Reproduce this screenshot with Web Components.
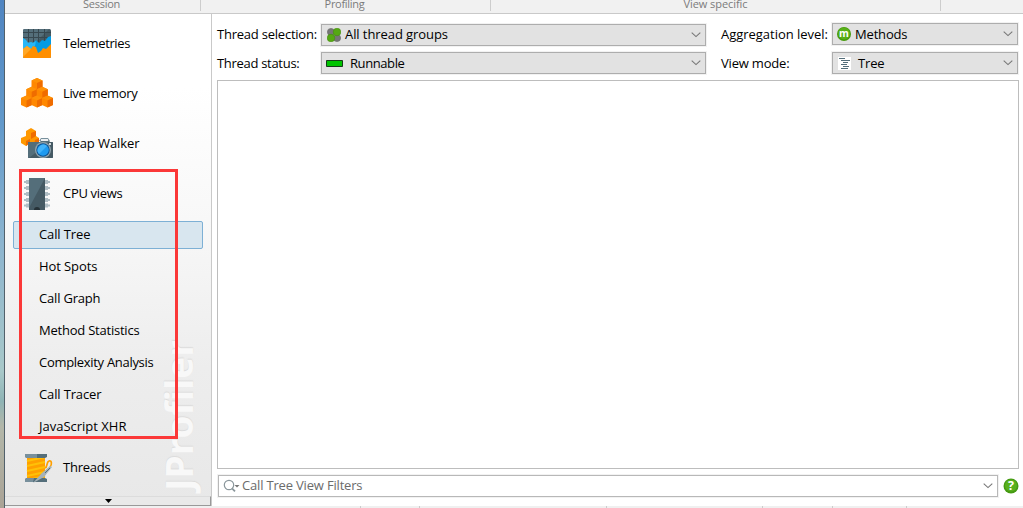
<!DOCTYPE html>
<html lang="en"><head><meta charset="utf-8"><title>JProfiler</title>
<style>
html,body{margin:0;height:100%;overflow:hidden;background:#fff}
body{font:13px/18px "Open Sans","Noto Sans",sans-serif;color:#000}
</style></head><body>
<profiler-window></profiler-window>
<script>
const define=(name,html,after)=>customElements.define(name,class extends HTMLElement{
  connectedCallback(){
    if(this.shadowRoot)return;
    const t=document.createElement('template');
    t.innerHTML=html;
    this.attachShadow({mode:'open'}).append(t.content.cloneNode(true));
    if(after)after.call(this,this.shadowRoot);
  }
});

/* One line of text, tracked so that it fills the width given in "w". */
define('ui-text','<style>:host{display:inline-block;white-space:pre;flex:none;padding-bottom:2px}:host([low]){padding:1px 0}</style><span><slot></slot></span>',function(r){
  const s=r.querySelector('span'),w=+this.getAttribute('w')-.6,n=this.textContent.length;
  const d=(w-s.getBoundingClientRect().width)/n;
  s.style.letterSpacing=d.toFixed(3)+'px';
});

const icons={
telemetry:`<svg width="32" height="32" viewBox="0 0 32 32"><defs><clipPath id="c"><rect x="2" y="1" width="28" height="29" rx="1.5"/></clipPath></defs><g clip-path="url(#c)"><path fill="#455a64" d="M2 1h28v29H2z"/><path fill="#546e7a" d="M2 1h26L2 27z"/><path d="M2 4.500h28M2 9.500h28M7.500 1v13M12.500 1v13M17.500 1v13M23.500 1v13" stroke="#37474f" fill="none"/><path fill="#039be5" d="M2 10l3 2 2 3 3-1 2 1 3-3 3 3 3-3 3 1 3-4 3-1v17H2z"/><path fill="#29b6f6" d="M2 10l3 2 2 3 3-1 2 1 3-2-1 5-12 9z"/><path fill="#ff8f00" d="M2 21l4-3 4 3 2-3 3 1 2 6 3-2 2-3 3 1 5-5v14H2z"/><path fill="#ffa726" d="M2 21l4-3 4 3-8 8z"/></g></svg>`,
memory:`<svg width="32" height="32" viewBox="0 0 32 32"><defs><g id="q"><path fill="#ff8800" d="M0 2.500L5.500 0 11 2.500v7L5.500 12 0 9.500z"/><path fill="#ff9206" d="M0 2.500L5.500 0 11 2.500 5.500 5z"/><path fill="#ef6c00" d="M11 2.500L5.500 5v7L11 9.500z"/></g></defs><use href="#q" x="10.500" y="0"/><use href="#q" x="5.200" y="8.700"/><use href="#q" x="15.800" y="8.700"/><use href="#q" x="0" y="17.500"/><use href="#q" x="10.500" y="17.500"/><use href="#q" x="21" y="17.500"/></svg>`,
heap:`<svg width="32" height="32" viewBox="0 0 32 32"><path fill="#ff9800" d="M5 3l5-3 5 3v5l3 2v4l-5 3-4-2-4 3-5-3v-5l5-2z"/><path fill="#ef6c00" d="M10 5l5-2v5l-5 3zM5 13l4-2v4l-4 3zM14 12l4-2v4l-5 3z"/><path fill="#546e7a" d="M7 14h12l2-3h6l2 3h2a1 1 0 0 1 1 1v14a1 1 0 0 1-1 1H7z"/><path fill="#455a64" d="M8 30l20-16h3a1 1 0 0 1 1 1v14a1 1 0 0 1-1 1z"/><path fill="#78909c" d="M18 13l2-3h7l2 3z"/><path fill="#eceff1" d="M20 11h7v2h-7z"/><circle cx="22" cy="22" r="8" fill="#90a4ae"/><circle cx="22" cy="22" r="6.700" fill="#0a4f8f"/><circle cx="22" cy="22" r="5.800" fill="#1e9af0"/><path d="M18 26a5.700 5.700 0 0 1 8-8z" fill="#42b3fa"/><path fill="#cfd8dc" d="M28 15h2v2h-2z"/></svg>`,
cpu:`<svg width="32" height="34" viewBox="0 0 32 34"><path d="M5 5h22M5 11h22M5 17h22M5 23h22M5 28.500h22" stroke="#b0bec5" stroke-width="4"/><path d="M3 5h26M3 11h26M3 17h26M3 23h26M3 28.500h26" stroke="#b0bec5" stroke-width="2"/><path fill="#455a64" d="M8 1h16v32H8z"/><path fill="#546e7a" d="M8 1h16L8 31z"/><path fill="#263238" d="M13 33a3 3 0 0 1 6 0z"/></svg>`,
threads:`<svg width="32" height="32" viewBox="0 0 32 32"><path fill="#ffa000" d="M6 4h18v24H6z"/><path d="M6 9l18-4M6 14l18-4M6 19l18-4M6 24l18-4M7 28l17-4" stroke="#ffc107" stroke-width="2"/><path fill="#546e7a" d="M4 2h22v3l-2 1H6L4 5zM4 30h22v-3l-2-1H6l-2 1z"/><path fill="#78909c" d="M4 2h12v4H6L4 5zM4 27l2-1h7l-1 4H4z"/><path d="M24 16c3-1 1-6 4-7s3 4 1 6" fill="none" stroke="#ffa000" stroke-width="1.700"/><path fill="#a5b2b8" d="M29 14l2 1-8 10-11 6 9-10z"/><path d="M29 16l-5 5" stroke="#546e7a"/></svg>`,
groups:`<svg width="14" height="14" viewBox="0 0 14 14"><g stroke-width=".6"><circle cx="4" cy="4" r="3.600" fill="#777" stroke="#666"/><circle cx="10" cy="10" r="3.600" fill="#777" stroke="#666"/><circle cx="10" cy="4" r="3.800" fill="#55a913" stroke="#438d0b"/><circle cx="4" cy="10" r="3.800" fill="#55a913" stroke="#438d0b"/></g></svg>`,
run:`<svg width="17" height="7" viewBox="0 0 17 7"><path fill="#00c400" stroke="#153c18" d="M.5.5h16v6H.5z"/></svg>`,
method:`<svg width="14" height="14" viewBox="0 0 14 14"><circle cx="7" cy="7" r="7" fill="#459a0b"/><circle cx="7" cy="6.500" r="6" fill="#58b018"/><text x="7" y="10" text-anchor="middle" font-family="Open Sans,sans-serif" font-weight="700" font-size="10" fill="#fff">m</text></svg>`,
tree:`<svg width="13" height="13" viewBox="0 0 13 13"><path fill="#fff" d="M0 0h13v13H0z"/><path d="M1 1.500h6M3 3.500h9M5 5.500h5M3 7.500h6M5 9.500h6M3 11.500h7" stroke="#546e7a"/></svg>`,
search:`<svg width="17" height="14" viewBox="0 0 17 14"><circle cx="6" cy="6" r="4.700" fill="none" stroke="#8b979c" stroke-width="1.200"/><path d="M9 9.300l3 3" stroke="#8b979c" stroke-width="1.800"/><path fill="#777" d="M11.500 6h5L14 8.500z"/></svg>`,
help:`<svg width="16" height="16" viewBox="0 0 16 16"><circle cx="8" cy="8" r="7.500" fill="#459a13"/><circle cx="8" cy="7.500" r="6" fill="#58b01c"/><text x="8" y="12.400" text-anchor="middle" font-family="Open Sans,sans-serif" font-weight="700" font-size="12.500" fill="#fff">?</text></svg>`
};
define('ui-icon','<style>:host{display:block;flex:none}svg{display:block}</style>',function(r){
  const t=document.createElement('template');t.innerHTML=icons[this.getAttribute('name')];r.append(t.content);
});

define('ribbon-group',`<style>:host{display:block;box-sizing:border-box;height:14px;border-bottom:1px solid #c9c9c9;color:#7b7b7b;font-size:11px;line-height:14px}
.in{display:flex;height:11px;border-right:1px solid var(--sep,#cdcdcd);justify-content:center}
slot{display:block;margin-top:-3px;height:14px}</style><div class="in"><slot></slot></div>`);

define('nav-section',`<style>:host{display:flex;align-items:center;height:50px;padding-left:16px;flex:none}
.i{width:42px;flex:none}</style><div class="i"><slot name="icon"></slot></div><slot></slot>`);

define('nav-item',`<style>:host{display:flex;box-sizing:border-box;align-items:center;height:28px;flex:none;margin:2px 8px;padding-left:25px;border:1px solid transparent;border-radius:2px}
:host([selected]){background:#d8e6ef;border-color:#7db0d5}</style><slot></slot>`);

define('combo-box',`<style>:host{display:flex;box-sizing:border-box;align-items:center;height:22px;border:1px solid #adadad;background:var(--bg,#e2e2e2);box-shadow:0 0 0 1px #f2f2f2;padding:0 4px}
.s{flex:1}svg{flex:none}slot{display:flex;align-items:center}</style>
<slot name="icon"></slot><slot></slot><span class="s"></span><svg width="10" height="6" viewBox="0 0 10 6"><path d="M.7.7L5 4.600 9.300.7" fill="none" stroke="#777" stroke-width="1.100"/></svg>`);

define('side-bar',`<style>
:host{display:flex;flex-direction:column;position:relative;box-sizing:border-box;width:207px;height:492px;background:linear-gradient(#fff 0,#fff 15%,#f8f8f8 42%,#ededed 72%,#e8e8e8);border-right:1px solid #c9c9c9;flex:none}
nav{display:flex;flex-direction:column;padding-top:5px;height:482px;box-sizing:border-box;position:relative}
.mark{position:absolute;left:152px;bottom:15px;writing-mode:vertical-rl;transform:rotate(180deg);font:700 37px/44px "Open Sans",sans-serif;color:#f8f8f8;text-shadow:1px 0 1px #dadada;white-space:nowrap}
.box{position:absolute;left:14px;top:155px;width:153px;height:264px;border:3px solid #fb3838;z-index:2}
.more{box-sizing:border-box;height:10px;border-top:1px solid #dcdcdc;border-right:1px solid #999;border-bottom:1px solid #999;display:flex;justify-content:center;align-items:center;padding-left:2px;background:#e9e9e9}
</style>
<div class="mark">JProfiler</div>
<nav>
<nav-section><ui-icon slot="icon" name="telemetry"></ui-icon><ui-text w="67.6">Telemetries</ui-text></nav-section>
<nav-section><ui-icon slot="icon" name="memory"></ui-icon><ui-text w="75">Live memory</ui-text></nav-section>
<nav-section><ui-icon slot="icon" name="heap"></ui-icon><ui-text w="77">Heap Walker</ui-text></nav-section>
<nav-section><ui-icon slot="icon" name="cpu"></ui-icon><ui-text w="60">CPU views</ui-text></nav-section>
<nav-item selected><ui-text w="52">Call Tree</ui-text></nav-item>
<nav-item><ui-text w="59">Hot Spots</ui-text></nav-item>
<nav-item><ui-text w="62">Call Graph</ui-text></nav-item>
<nav-item><ui-text w="101">Method Statistics</ui-text></nav-item>
<nav-item><ui-text w="115">Complexity Analysis</ui-text></nav-item>
<nav-item><ui-text w="63">Call Tracer</ui-text></nav-item>
<nav-item><ui-text w="88">JavaScript XHR</ui-text></nav-item>
<nav-section><ui-icon slot="icon" name="threads"></ui-icon><ui-text w="48">Threads</ui-text></nav-section>
</nav>
<div class="more"><svg width="7" height="4" viewBox="0 0 7 4"><path d="M0 0h7L3.500 4z"/></svg></div>
<div class="box"></div>`);

define('call-tree-view',`<style>
:host{display:flex;flex-direction:column;box-sizing:border-box;flex:1;padding:9px 4px 0 5px;background:#fff}
.f{display:grid;grid-template-columns:104px 385px 15px 111px 186px;height:51px;align-content:start;row-gap:6px;padding-top:1px;align-items:center}
.l2{grid-column:4}.a{margin-top:-1px;margin-bottom:1px}
.view{box-sizing:border-box;height:389px;margin-top:5px;border:1px solid #bdbdbd}
.foot{display:flex;align-items:center;margin:6px 0 0 1px;gap:5px}
.foot combo-box{width:780px;--bg:#fff;color:#6b6b6b;border-color:#b8b8b8}
.g{margin-right:4px}.r{margin-right:7px}.t{margin:0 7px 0 1px}.q{margin-right:2px}
</style>
<div class="f">
<ui-text w="100.500">Thread selection:</ui-text><combo-box><ui-icon class="g" style="margin-left:1px" slot="icon" name="groups"></ui-icon><ui-text w="103.600">All thread groups</ui-text></combo-box>
<ui-text class="l2" w="107.500">Aggregation level:</ui-text><combo-box class="a"><ui-icon class="g" slot="icon" name="method"></ui-icon><ui-text low w="53">Methods</ui-text></combo-box>
<ui-text low w="83">Thread status:</ui-text><combo-box><ui-icon class="r" slot="icon" name="run"></ui-icon><ui-text low w="55">Runnable</ui-text></combo-box>
<ui-text low class="l2" w="69">View mode:</ui-text><combo-box><ui-icon class="t" slot="icon" name="tree"></ui-icon><ui-text low w="27">Tree</ui-text></combo-box>
</div>
<div class="view"></div>
<div class="foot"><combo-box><ui-icon class="q" slot="icon" name="search"></ui-icon><ui-text w="121">Call Tree View Filters</ui-text></combo-box><ui-icon name="help"></ui-icon></div>`);

define('profiler-window',`<style>
:host{display:flex;width:1023px;height:508px;overflow:hidden}
.desk{width:4px;flex:none;background:linear-gradient(#5085c1 0,#639acb 25%,#8db5cf 48%,#a8c8c9 73%,#8fb4b5 79%,#b3b7a9 84%,#aaa396);border-right:1px solid #52616b}
.win{flex:1;display:flex;flex-direction:column;min-width:0}
.rib{display:grid;grid-template-columns:196px 290px 450px 1fr;background:#f1f1f1}
.rib ribbon-group:nth-child(1) ui-text,.rib ribbon-group:nth-child(2) ui-text{margin-right:2px}
.main{display:flex;height:492px}
.status{height:2px;background:#f0f0f0;display:flex}
.status i{border-right:1px solid #ccc;box-sizing:border-box}
</style>
<div class="desk"></div><div class="win">
<div class="rib"><ribbon-group><ui-text w="37.500">Session</ui-text></ribbon-group><ribbon-group><ui-text w="40.500">Profiling</ui-text></ribbon-group><ribbon-group><ui-text w="64.500">View specific</ui-text></ribbon-group><ribbon-group style="--sep:transparent"></ribbon-group></div>
<div class="main"><side-bar></side-bar><call-tree-view></call-tree-view></div>
<div class="status"><i style="width:356px"></i><i style="width:59px"></i><i style="width:187px"></i><i style="width:156px"></i><i style="width:70px"></i><i style="width:74px"></i></div>
</div>`);
</script></body></html>
